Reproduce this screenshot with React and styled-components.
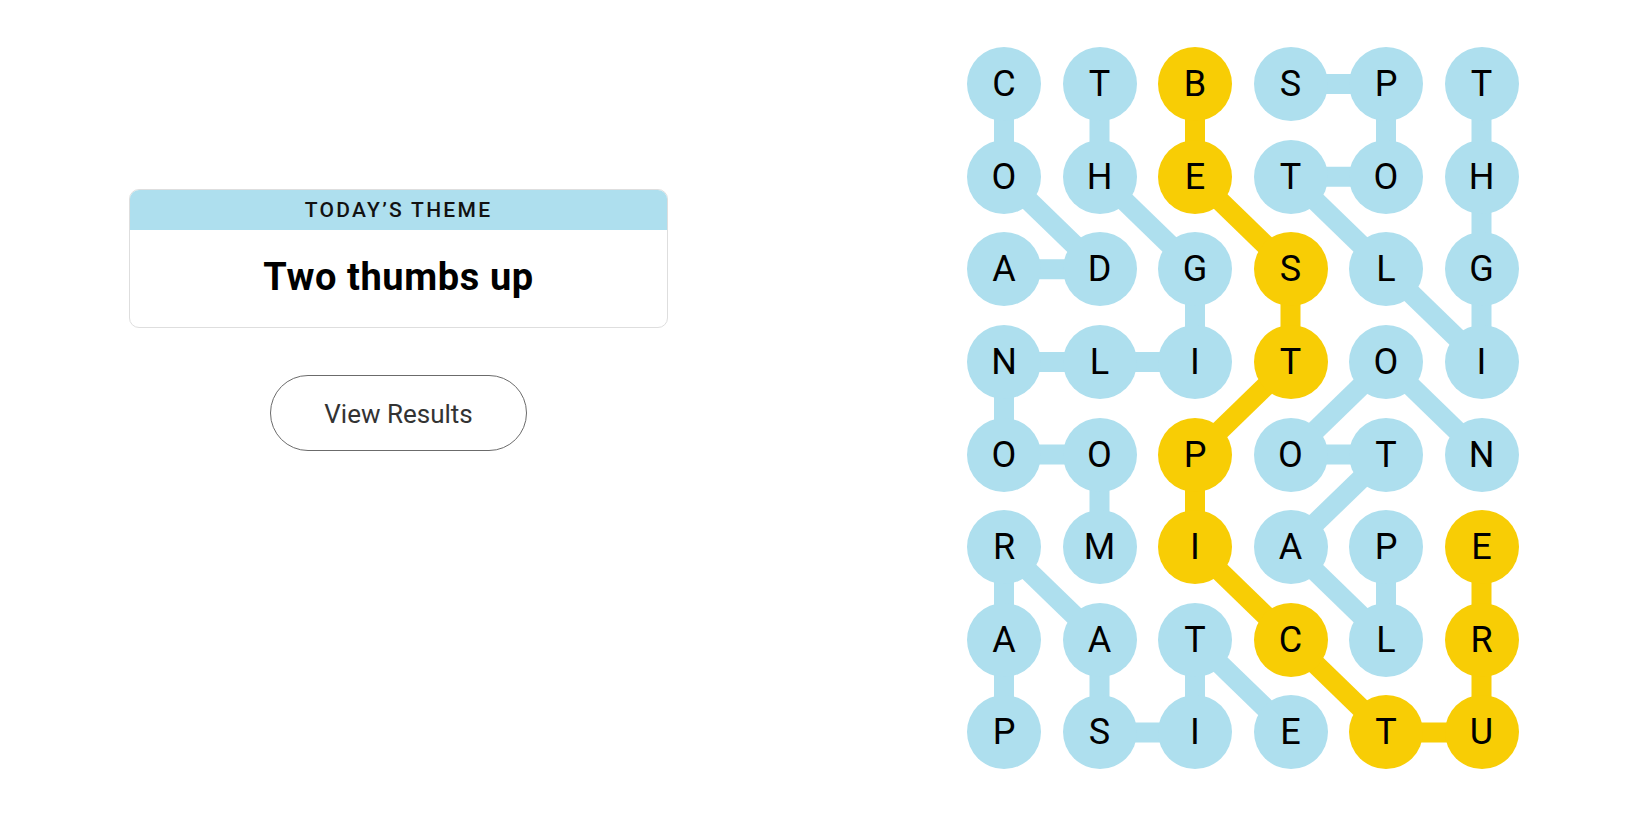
import React from 'react';
import styled, { createGlobalStyle } from 'styled-components';

const GlobalStyle = createGlobalStyle`
  html, body { margin: 0; padding: 0; background: #ffffff; }
  body { font-family: Roboto, "Liberation Sans", Arial, sans-serif; color: #121212; }
  * { box-sizing: border-box; }
`;

const CELL = 74;
const GAP_X = 21.5;
const GAP_Y = 18.64;
const PITCH_X = CELL + GAP_X;
const PITCH_Y = CELL + GAP_Y;
const BLUE = '#aedfee';
const YELLOW = '#f8cd05';

const LETTERS = ['CTBSPT', 'OHETOH', 'ADGSLG', 'NLITOI', 'OOPOTN', 'RMIAPE', 'AATCLR', 'PSIETU'];

const WORDS = [
  { name: 'CODA', spangram: false, path: [[0, 0], [1, 0], [2, 1], [2, 0]] },
  { name: 'MOONLIGHT', spangram: false, path: [[5, 1], [4, 1], [4, 0], [3, 0], [3, 1], [3, 2], [2, 2], [1, 1], [0, 1]] },
  { name: 'SPOTLIGHT', spangram: false, path: [[0, 3], [0, 4], [1, 4], [1, 3], [2, 4], [3, 5], [2, 5], [1, 5], [0, 5]] },
  { name: 'PARASITE', spangram: false, path: [[7, 0], [6, 0], [5, 0], [6, 1], [7, 1], [7, 2], [6, 2], [7, 3]] },
  { name: 'PLATOON', spangram: false, path: [[5, 4], [6, 4], [5, 3], [4, 4], [4, 3], [3, 4], [4, 5]] },
  { name: 'BESTPICTURE', spangram: true, path: [[0, 2], [1, 2], [2, 3], [3, 3], [4, 2], [5, 2], [6, 3], [7, 4], [7, 5], [6, 5], [5, 5]] },
];

const spangramCells = new Set(
  WORDS.filter((w) => w.spangram).flatMap((w) => w.path.map(([r, c]) => `${r}-${c}`))
);

const center = (r, c) => [c * PITCH_X + CELL / 2, r * PITCH_Y + CELL / 2];

const BOARD_W = 6 * CELL + 5 * GAP_X;
const BOARD_H = 8 * CELL + 7 * GAP_Y;

const Page = styled.main`
  display: flex;
  align-items: flex-start;
  min-height: 825px;
  padding: 47px 0 0 129px;
`;

const Side = styled.section`
  width: 539px;
  margin-top: 142px;
  display: flex;
  flex-direction: column;
  align-items: center;
  gap: 47px;
`;

const ThemeCard = styled.div`
  width: 100%;
  border: 1px solid #dedede;
  border-radius: 10px;
  overflow: hidden;
  background: #fff;
`;

const ThemeHeader = styled.h2`
  margin: 0;
  height: 40px;
  background: ${BLUE};
  display: flex;
  align-items: center;
  justify-content: center;
  font-size: 21px;
  font-weight: 500;
  letter-spacing: 2.3px;
  text-transform: uppercase;
  color: #121212;
`;

const ThemeBody = styled.div`
  height: 97px;
  display: flex;
  align-items: center;
  justify-content: center;
  padding-bottom: 4px;
`;

const ThemeTitle = styled.h1`
  margin: 0;
  font-size: 38px;
  font-weight: 700;
  letter-spacing: 0.6px;
  color: #000;
`;

const ResultsButton = styled.button`
  width: 257px;
  height: 76px;
  border: 1px solid #6b6b6b;
  border-radius: 38px;
  background: #fff;
  font-family: Roboto, "Liberation Sans", Arial, sans-serif;
  font-size: 26px;
  font-weight: 400;
  letter-spacing: 0;
  color: #333;
  padding-top: 3px;
  cursor: pointer;
`;

const Board = styled.div`
  position: relative;
  margin-left: 299px;
  width: ${BOARD_W}px;
  height: ${BOARD_H}px;
`;

const Lines = styled.svg`
  position: absolute;
  left: 0;
  top: 0;
  z-index: 0;
`;

const Grid = styled.div`
  position: relative;
  z-index: 1;
  display: grid;
  grid-template-columns: repeat(6, ${CELL}px);
  grid-template-rows: repeat(8, ${CELL}px);
  column-gap: ${GAP_X}px;
  row-gap: ${GAP_Y}px;
`;

const Tile = styled.button`
  width: ${CELL}px;
  height: ${CELL}px;
  border: none;
  border-radius: 50%;
  padding: 0;
  display: flex;
  align-items: center;
  justify-content: center;
  background: ${(p) => (p.$spangram ? YELLOW : BLUE)};
  font-family: Roboto, "Liberation Sans", Arial, sans-serif;
  font-size: 36px;
  font-weight: 400;
  color: #000;
  cursor: pointer;
`;

export default function App() {
  return (
    <>
      <GlobalStyle />
      <Page>
        <Side>
          <ThemeCard>
            <ThemeHeader>Today’s Theme</ThemeHeader>
            <ThemeBody>
              <ThemeTitle>Two thumbs up</ThemeTitle>
            </ThemeBody>
          </ThemeCard>
          <ResultsButton>View Results</ResultsButton>
        </Side>
        <Board>
          <Lines width={BOARD_W} height={BOARD_H} viewBox={`0 0 ${BOARD_W} ${BOARD_H}`}>
            {WORDS.map((w) =>
              w.path.slice(1).map(([r, c], i) => {
                const [r0, c0] = w.path[i];
                const [x1, y1] = center(r0, c0);
                const [x2, y2] = center(r, c);
                return (
                  <line
                    key={`${w.name}-${i}`}
                    x1={x1}
                    y1={y1}
                    x2={x2}
                    y2={y2}
                    stroke={w.spangram ? YELLOW : BLUE}
                    strokeWidth={20}
                  />
                );
              })
            )}
          </Lines>
          <Grid>
            {LETTERS.flatMap((row, r) =>
              row.split('').map((ch, c) => (
                <Tile key={`${r}-${c}`} $spangram={spangramCells.has(`${r}-${c}`)}>
                  {ch}
                </Tile>
              ))
            )}
          </Grid>
        </Board>
      </Page>
    </>
  );
}
